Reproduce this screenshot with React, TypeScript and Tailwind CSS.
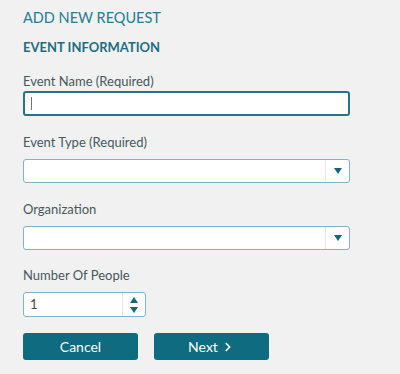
import { ChevronRight } from "lucide-react";

function Caret({ up = false }: { up?: boolean }) {
  return (
    <svg width="8" height="6" viewBox="0 0 8 6" className={up ? "rotate-180" : ""}>
      <path d="M0 0h8L4 6z" fill="#15677a" />
    </svg>
  );
}

function Label({ children }: { children: string }) {
  return <div className="text-[13px] leading-[16px] text-[#47585e]">{children}</div>;
}

function SelectBox() {
  return (
    <div className="flex h-[24px] w-[327px] overflow-hidden rounded-[3px] border border-[#7fb4c1] bg-white">
      <div className="flex-1" />
      <div className="flex w-[24px] items-center justify-center border-l border-[#e6e6e6]">
        <Caret />
      </div>
    </div>
  );
}

export default function App() {
  return (
    <div className="min-h-[374px] w-[400px] bg-[#f1f1f1] px-[23px] pt-[9px] font-['Lato',sans-serif]">
      <h1 className="text-[14.5px] leading-[18px] text-[#237e91]">ADD NEW REQUEST</h1>
      <h2 className="mt-[12px] text-[13px] font-bold leading-[16px] text-[#1c6f82]">EVENT INFORMATION</h2>

      <div className="mt-[18px]">
        <Label>Event Name (Required)</Label>
        <div className="mt-[2px] flex h-[25px] w-[327px] items-center rounded-[3px] border-2 border-[#2a7385] bg-white px-[6px]">
          <div className="h-[13px] w-px bg-[#777]" />
        </div>
      </div>

      <div className="mt-[18px]">
        <Label>Event Type (Required)</Label>
        <div className="mt-[9px]">
          <SelectBox />
        </div>
      </div>

      <div className="mt-[18px]">
        <Label>Organization</Label>
        <div className="mt-[9px]">
          <SelectBox />
        </div>
      </div>

      <div className="mt-[17px]">
        <Label>Number Of People</Label>
        <div className="mt-[9px] flex h-[25px] w-[123px] overflow-hidden rounded-[3px] border border-[#7fb4c1] bg-white">
          <div className="flex flex-1 items-center px-[6px] text-[13px] text-[#444]">1</div>
          <div className="flex w-[23px] flex-col items-center justify-center gap-[4px] border-l border-[#e6e6e6]">
            <Caret up />
            <Caret />
          </div>
        </div>
      </div>

      <div className="mt-[16px] flex gap-[16px]">
        <button className="h-[27px] w-[115px] rounded-[3px] bg-[#0e6b80] text-[14px] text-white">Cancel</button>
        <button className="flex h-[27px] w-[115px] items-center justify-center gap-[3px] rounded-[3px] bg-[#0e6b80] text-[14px] text-white">
          Next
          <ChevronRight size={14} strokeWidth={3} />
        </button>
      </div>
    </div>
  );
}
